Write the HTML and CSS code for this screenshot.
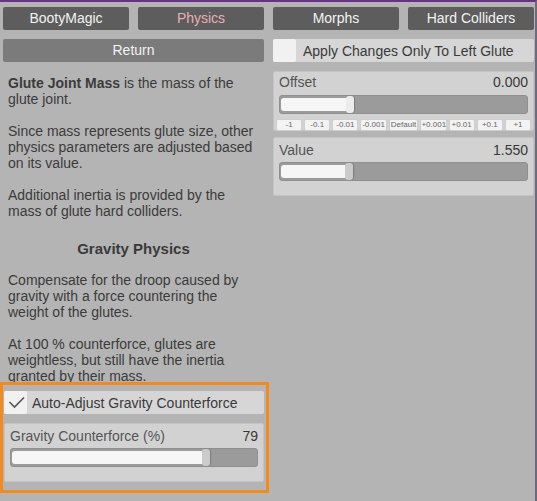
FILE: index.html
```html
<!DOCTYPE html>
<html>
<head>
<meta charset="utf-8">
<link rel="stylesheet" href="styles.css">
</head>
<body>
<div class="app">
  <div class="col">
    <div class="tabs">
      <div class="tab">BootyMagic</div>
      <div class="tab active">Physics</div>
    </div>
    <div class="return">Return</div>
    <div class="info">
      <p><b>Glute Joint Mass</b> is the mass of the<br>glute joint.</p>
      <p>Since mass represents glute size, other<br>physics parameters are adjusted based<br>on its value.</p>
      <p>Additional inertia is provided by the<br>mass of glute hard colliders.</p>
      <h3>Gravity Physics</h3>
      <p>Compensate for the droop caused by<br>gravity with a force countering the<br>weight of the glutes.</p>
      <p>At 100 % counterforce, glutes are<br>weightless, but still have the inertia<br>granted by their mass.</p>
    </div>
    <div class="highlight">
      <div class="toggle">
        <div class="check"><svg width="23" height="23" viewBox="0 0 23 23"><polyline points="5.5,11 10.5,16 20,6.5" fill="none" stroke="#555" stroke-width="1.6"/></svg></div>
        <span>Auto-Adjust Gravity Counterforce</span>
      </div>
      <div class="panel">
        <div class="phead"><span class="plabel">Gravity Counterforce (%)</span><span class="pval">79</span></div>
        <div class="track"><div class="fill" style="width:190px"></div><div class="handle"></div></div>
      </div>
    </div>
  </div>
  <div class="col">
    <div class="tabs">
      <div class="tab">Morphs</div>
      <div class="tab">Hard Colliders</div>
    </div>
    <div class="toggle top">
      <div class="check"></div>
      <span>Apply Changes Only To Left Glute</span>
    </div>
    <div class="panel offset">
      <div class="phead"><span class="plabel">Offset</span><span class="pval">0.000</span></div>
      <div class="track"><div class="fill" style="width:65px"></div><div class="handle light"></div></div>
      <div class="steps">
        <span>-1</span><span>-0.1</span><span>-0.01</span><span>-0.001</span><span class="wide">Default</span><span>+0.001</span><span>+0.01</span><span>+0.1</span><span>+1</span>
      </div>
    </div>
    <div class="panel value">
      <div class="phead"><span class="plabel">Value</span><span class="pval">1.550</span></div>
      <div class="track"><div class="fill" style="width:64px"></div><div class="handle"></div></div>
    </div>
  </div>
</div>
</body>
</html>
```
FILE: styles.css
```css
html, body {
  margin: 0;
  padding: 0;
}
body {
  width: 537px;
  height: 501px;
  box-sizing: border-box;
  background: #b4b4b4;
  border-top: 2px solid #6a2f86;
  border-right: 2px solid #6f6a78;
  font-family: "Liberation Sans", Arial, sans-serif;
  font-size: 14px;
  color: #3b3b3b;
  overflow: hidden;
}
.app {
  display: flex;
  gap: 9px;
  padding-left: 3px;
}
.col {
  width: 261px;
  display: flex;
  flex-direction: column;
}
.tabs {
  display: flex;
  gap: 9px;
  margin-top: 5px;
}
.tab {
  width: 126px;
  height: 23px;
  line-height: 23px;
  background: #5d5d5d;
  color: #f2f2f2;
  text-align: center;
  border-radius: 2px;
}
.tab.active {
  color: #e8aeb6;
}
.return {
  margin-top: 9px;
  height: 23px;
  line-height: 23px;
  background: #7b7b7b;
  color: #f2f2f2;
  text-align: center;
  border-radius: 2px;
}
.info {
  margin-top: 13px;
  padding: 0 5px;
  line-height: 16px;
}
.info p {
  margin: 0 0 16px;
}
.info p:last-child {
  margin-bottom: 0;
}
.info h3 {
  margin: 20px 0 13px;
  font-size: 15px;
  line-height: 20px;
  text-align: center;
  color: #3a3a3a;
}
.highlight {
  margin: -2px 0 0 -3px;
  width: 269px;
  box-sizing: border-box;
  border: 3px solid #f28a1e;
  padding: 6px 2px 8px 1px;
  display: flex;
  flex-direction: column;
  gap: 9px;
}
.toggle {
  display: flex;
  align-items: center;
  height: 23px;
  background: #d6d6d6;
  border-radius: 2px;
  color: #3a3a3a;
}
.toggle.top {
  margin-top: 9px;
}
.toggle span {
  padding-left: 5px;
}
.toggle.top span {
  padding-left: 7px;
}
.check {
  width: 23px;
  height: 23px;
  background: #f1f1f1;
  border-radius: 2px;
}
.check svg {
  display: block;
}
.panel {
  background: #d2d2d2;
  border: 1px solid #c4c4c4;
  border-radius: 2px;
  box-sizing: border-box;
  padding: 4px 5px 0;
  height: 59px;
}
.panel.offset {
  margin-top: 9px;
  height: 60px;
  padding-top: 2px;
}
.panel.value {
  margin-top: 6px;
}
.phead {
  display: flex;
  justify-content: space-between;
  line-height: 16px;
}
.plabel {
  color: #555;
}
.pval {
  color: #383838;
}
.track {
  margin-top: 4px;
  height: 19px;
  background: #9b9b9b;
  border: 1px solid #8f8f8f;
  box-sizing: border-box;
  border-radius: 3px;
  display: flex;
  align-items: center;
  padding-left: 1px;
}
.offset .track {
  margin-top: 5px;
}
.fill {
  height: 13px;
  background: #f6f6f6;
  border-radius: 3px 0 0 3px;
}
.handle {
  width: 8px;
  height: 17px;
  background: #cbcbcb;
  border-radius: 3px;
  box-shadow: 1px 0 1px #7d7d7d;
}
.handle.light {
  background: #ececec;
}
.steps {
  display: flex;
  gap: 2px;
  margin: 5px -3px 0 -3px;
}
.steps span {
  flex: 1 1 0;
  height: 10px;
  line-height: 10px;
  background: #f3f3f3;
  border: 1px solid #cfcfcf;
  border-radius: 2px;
  font-size: 8px;
  color: #666;
  text-align: center;
  white-space: nowrap;
  overflow: hidden;
}
.steps span.wide {
  flex-grow: 1.15;
}
```
